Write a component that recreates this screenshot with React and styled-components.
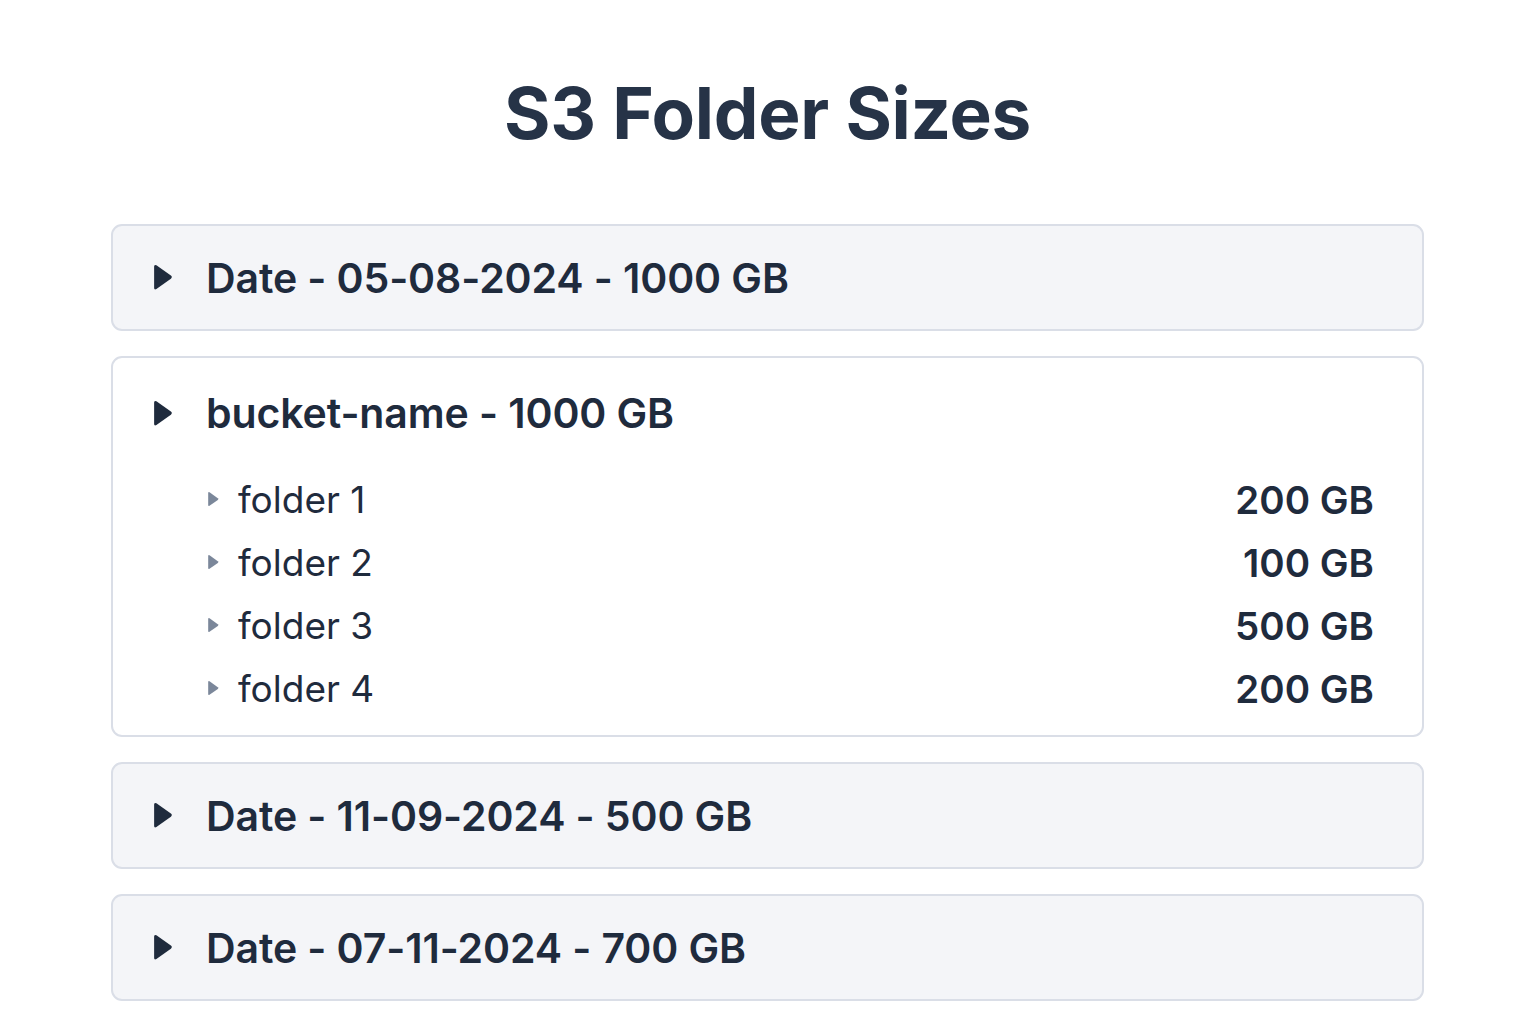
import React from "react";
import styled, { createGlobalStyle } from "styled-components";

const Global = createGlobalStyle`
  html, body { margin: 0; padding: 0; background: #ffffff; }
  body { font-family: Inter, "Noto Sans", "Liberation Sans", sans-serif; color: #1f2b3d; }
`;

const Page = styled.div`
  width: 1536px;
  min-height: 1024px;
  box-sizing: border-box;
  padding: 72px 112px 0 111px;
  display: flex;
  flex-direction: column;
`;

const Title = styled.h1`
  margin: 0 0 70px;
  text-align: center;
  font-size: 71px;
  line-height: 82px;
  font-weight: 700;
  letter-spacing: -0.3px;
  color: #263347;
`;

const List = styled.div`
  display: flex;
  flex-direction: column;
  gap: 25px;
`;

const Card = styled.div`
  border: 2px solid #dadee7;
  border-radius: 11px;
  background: ${(p) => (p.$open ? "#ffffff" : "#f4f5f8")};
  box-sizing: border-box;
  padding-bottom: ${(p) => (p.$open ? "15px" : "0")};
`;

const Header = styled.div`
  height: ${(p) => (p.$open ? "110px" : "103px")};
  display: flex;
  align-items: center;
  padding-left: 39px;
  gap: 33px;
`;

const HeaderText = styled.span`
  font-size: 41px;
  font-weight: 600;
  color: #1f2b3d;
  letter-spacing: -0.1px;
`;

const Rows = styled.div`
  display: flex;
  flex-direction: column;
  padding: 0 48px 0 94px;
`;

const Row = styled.div`
  height: 63px;
  display: flex;
  align-items: center;
`;

const RowName = styled.span`
  margin-left: 19px;
  flex: 1;
  font-size: 37px;
  font-weight: 400;
  color: #1f2b3d;
`;

const RowSize = styled.span`
  font-size: 38.5px;
  font-weight: 600;
  color: #1f2b3d;
`;

const Caret = ({ size, color }) => (
  <svg width={size} height={size * 1.35} viewBox="0 0 20 27" style={{ flexShrink: 0 }}>
    <path d="M2 3.5 Q2 1 4.2 2.2 L18 12 Q19.8 13.5 18 15 L4.2 24.8 Q2 26 2 23.5 Z" fill={color} />
  </svg>
);

const dates = [
  { label: "Date - 05-08-2024 - 1000 GB" },
  {
    label: "bucket-name - 1000 GB",
    open: true,
    rows: [
      ["folder 1", "200 GB"],
      ["folder 2", "100 GB"],
      ["folder 3", "500 GB"],
      ["folder 4", "200 GB"],
    ],
  },
  { label: "Date - 11-09-2024 - 500 GB" },
  { label: "Date - 07-11-2024 - 700 GB" },
];

export default function App() {
  return (
    <>
      <Global />
      <Page>
        <Title>S3 Folder Sizes</Title>
        <List>
          {dates.map((d) => (
            <Card key={d.label} $open={d.open}>
              <Header $open={d.open}>
                <Caret size={21} color="#1f2b3d" />
                <HeaderText>{d.label}</HeaderText>
              </Header>
              {d.rows && (
                <Rows>
                  {d.rows.map(([n, s]) => (
                    <Row key={n}>
                      <Caret size={12} color="#7b879a" />
                      <RowName>{n}</RowName>
                      <RowSize>{s}</RowSize>
                    </Row>
                  ))}
                </Rows>
              )}
            </Card>
          ))}
        </List>
      </Page>
    </>
  );
}
